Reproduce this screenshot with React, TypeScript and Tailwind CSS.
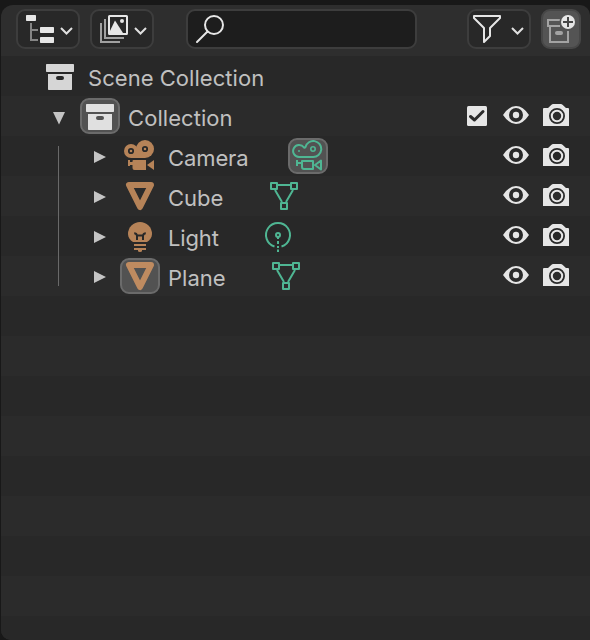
import React from "react";

type IconProps = { className?: string };

const Chevron = ({ x }: { x: number }) => (
  <path d={`M${x} 17l5.5 5.5 5.5-5.5`} fill="none" stroke="#e0e0e0" strokeWidth="2" />
);

const OutlinerIcon = () => (
  <svg width="60" height="36" viewBox="0 0 60 36">
    <path d="M13 12V29H20M13 19H20" fill="none" stroke="#858585" strokeWidth="2" />
    <g fill="#e6e6e6">
      <rect x="8" y="4" width="10" height="6" rx="0.7" />
      <rect x="22" y="16" width="14" height="6" rx="0.7" />
      <rect x="22" y="26" width="14" height="6" rx="0.7" />
    </g>
    <Chevron x={43} />
  </svg>
);

const ImagesIcon = () => (
  <svg width="60" height="36" viewBox="0 0 60 36">
    <path d="M9 12V31H28" fill="none" stroke="#a0a0a0" strokeWidth="2" />
    <path d="M13 8V27H32" fill="none" stroke="#a0a0a0" strokeWidth="2" />
    <rect x="17" y="5" width="18" height="18" rx="0.5" fill="none" stroke="#e6e6e6" strokeWidth="2" />
    <path d="M17 22L23 9.5 31 22Z" fill="#e6e6e6" />
    <circle cx="30" cy="10" r="2" fill="#e6e6e6" />
    <Chevron x={43} />
  </svg>
);

const SearchIcon = () => (
  <svg width="40" height="36" viewBox="0 0 40 36" fill="none" stroke="#e6e6e6" strokeWidth="2">
    <circle cx="26" cy="14" r="9" />
    <path d="M19.5 20.5L9 31" strokeLinecap="round" />
  </svg>
);

const FilterIcon = () => (
  <svg width="60" height="36" viewBox="0 0 60 36">
    <path
      d="M5 5H31V7L21 17V25L15 31V17L5 7Z"
      fill="none"
      stroke="#e6e6e6"
      strokeWidth="2"
      strokeLinejoin="round"
    />
    <Chevron x={43} />
  </svg>
);

const NewCollectionIcon = () => (
  <svg width="36" height="36" viewBox="0 0 36 36">
    <path
      d="M17 9H5V15H17M7 15V31H25V20"
      fill="none"
      stroke="#a3a3a3"
      strokeWidth="2"
    />
    <rect x="12" y="20" width="8" height="4" rx="2" fill="#a3a3a3" />
    <circle cx="25" cy="11" r="8.5" fill="#545454" />
    <circle cx="25" cy="11" r="7" fill="#e6e6e6" />
    <path d="M25 6V16M20 11H30" stroke="#474747" strokeWidth="2" />
  </svg>
);

const ArchiveIcon = () => (
  <svg className="block" width="40" height="36" viewBox="0 0 40 36" fill="currentColor">
    <rect x="6" y="6" width="28" height="8" rx="0.7" />
    <path
      fillRule="evenodd"
      d="M8 16H32V31.3Q32 32 31.3 32H8.7Q8 32 8 31.3ZM18 18A2 2 0 0 0 18 22H22A2 2 0 0 0 22 18Z"
    />
  </svg>
);

const CameraObject = () => (
  <svg className="block" width="40" height="36" viewBox="0 0 40 36" fill="#b68358">
    <circle cx="11" cy="13" r="7" />
    <circle cx="25" cy="11" r="9" />
    <rect x="11" y="13" width="14" height="7" />
    <g fill="none" stroke="#282828" strokeWidth="1.8">
      <circle cx="11" cy="13" r="2.2" />
      <circle cx="25" cy="11" r="2.2" />
    </g>
    <path d="M8 22H10V24H12.5V23Q12.5 22 13.5 22H26V32H14.5Q12.5 32 12.5 30V27H10V28H8Z" />
    <path d="M27 27L34 22V32Z" />
  </svg>
);

const MeshObject = ({ className }: IconProps) => (
  <svg className={`block ${className}`} width="40" height="36" viewBox="0 0 40 36" fill="none">
    <path d="M9 7H31L20 29Z" stroke="currentColor" strokeWidth="6" strokeLinejoin="round" />
  </svg>
);

const LightObject = () => (
  <svg className="block" width="40" height="36" viewBox="0 0 40 36" fill="#b68358">
    <path d="M13 24C10 22 8 19.5 8 16A12 12 0 0 1 32 16C32 19.5 30 22 27 24Z" />
    <path
      d="M14.2 15.2Q16.5 15.2 17 17.6H23Q23.5 15.2 25.8 15.2M17 17V22M23 17V22"
      fill="none"
      stroke="#282828"
      strokeWidth="2"
    />
    <path d="M14 26H26V28H14ZM14 30H26V32H22V33Q22 34 20 34Q18 34 18 33V32H14Z" />
  </svg>
);

const CameraData = () => (
  <svg
    className="block"
    width="36"
    height="32"
    viewBox="2 2 36 32"
    fill="none"
    stroke="#4fb693"
    strokeWidth="2"
    strokeLinejoin="round"
  >
    <path d="M11 19A6 6 0 1 1 16 9.5Q17 10 17.5 9A8 8 0 1 1 25 19Z" />
    <circle cx="25" cy="11" r="2.2" strokeWidth="1.6" />
    <circle cx="11" cy="13" r="1" fill="#4fb693" stroke="none" />
    <path d="M9 22V28M9 25H13M14 23H25V31H16Q14 31 14 29ZM33 22.5V31.5L27 27Z" />
  </svg>
);

const MeshData = () => (
  <svg
    className="block"
    width="40"
    height="36"
    viewBox="0 0 40 36"
    fill="none"
    stroke="#4fb693"
    strokeWidth="2"
    strokeLinejoin="round"
  >
    <rect x="7" y="5" width="6" height="6" />
    <rect x="27" y="5" width="6" height="6" />
    <rect x="17" y="25" width="6" height="6" />
    <path d="M14 7H26M11 12L18 24M29 12L22 24" />
  </svg>
);

const LightData = () => (
  <svg
    className="block"
    width="40"
    height="36"
    viewBox="0 0 40 36"
    fill="none"
    stroke="#4fb693"
    strokeWidth="2"
  >
    <path d="M16.5 28.5A12 12 0 1 1 23.5 28.5" />
    <circle cx="20" cy="17" r="2" />
    <path d="M20 19V21M20 23V26M20 28V30M20 31.5V34" />
  </svg>
);

const CheckedBox = () => (
  <svg className="block" width="20" height="20" viewBox="0 0 20 20">
    <rect width="20" height="20" rx="1.5" fill="#e6e6e6" />
    <path
      d="M3.5 10.5L7.5 14L16 5.5"
      fill="none"
      stroke="#2b2b2b"
      strokeWidth="3"
      strokeLinecap="round"
      strokeLinejoin="round"
    />
  </svg>
);

const EyeIcon = ({ className }: IconProps) => (
  <svg className={className} width="26" height="18" viewBox="0 0 26 18" fill="#e6e6e6">
    <path
      fillRule="evenodd"
      d="M0 9Q6 0 13 0T26 9Q20 18 13 18T0 9ZM13 2A7 7 0 0 0 13 16A7 7 0 0 0 13 2Z"
    />
    <circle cx="13" cy="9" r="3.2" />
  </svg>
);

const RenderIcon = ({ className }: IconProps) => (
  <svg className={className} width="26" height="22" viewBox="0 0 26 22" fill="#e6e6e6">
    <path
      fillRule="evenodd"
      d="M1 4H5L8.5 0.7Q9.3 0 10 0H18Q18.7 0 19.5 0.7L23 4H25Q26 4 26 5V22H0V5Q0 4 1 4ZM14 4A8 8 0 0 0 14 20A8 8 0 0 0 14 4Z"
    />
    <circle cx="14" cy="12" r="5.2" fill="none" stroke="#e6e6e6" strokeWidth="2" />
  </svg>
);

const Badge = ({ children }: { children: React.ReactNode }) => (
  <span className="flex h-9 w-10 shrink-0 items-center justify-center overflow-hidden rounded-[9px] border-2 border-[#6b6b6b] bg-[#525252]">
    <span className="shrink-0">{children}</span>
  </span>
);

const Toggles = () => (
  <div className="ml-auto flex items-start self-start pr-[21px]">
    <EyeIcon className="mt-[10px] block" />
    <RenderIcon className="mt-2 ml-[14px] block" />
  </div>
);

type ObjectRowProps = {
  name: string;
  width: string;
  icon: React.ReactNode;
  data: React.ReactNode;
  shade: string;
};

const ObjectRow = ({ name, width, icon, data, shade }: ObjectRowProps) => (
  <div className={`flex h-10 shrink-0 items-center ${shade}`}>
    <svg className="mr-[14px] ml-[93px] shrink-0" width="12" height="16" viewBox="0 0 12 16">
      <path d="M0 3L12 9L0 15Z" fill="#c4c4c4" />
    </svg>
    {icon}
    <span className={`ml-2 mr-10 whitespace-nowrap pt-1 ${width}`}>{name}</span>
    {data}
    <Toggles />
  </div>
);

const DARK = "bg-[#282828]";
const LIGHT = "bg-[#2b2b2b]";
const EMPTY_ROWS = [DARK, LIGHT, DARK, LIGHT, DARK, LIGHT, DARK, LIGHT, DARK];
const BUTTON = "h-10 shrink-0 overflow-hidden rounded-[9px] border-2 border-[#3d3d3d] bg-[#282828]";

export default function App() {
  return (
    <div className="h-[640px] w-[590px] overflow-hidden bg-[#181818] pt-[5px] pl-px font-['Inter',sans-serif] text-[22px] leading-none text-[#c0c0c0]">
      <div className="relative flex h-[635px] flex-col overflow-hidden rounded-tl-xl rounded-tr-[10px] rounded-bl-[10px] bg-[#2e2e2e]">
        <header className="flex h-[51px] shrink-0 items-start pt-1 pl-[15px]">
          <button className={`${BUTTON} w-16`}>
            <OutlinerIcon />
          </button>
          <button className={`${BUTTON} ml-[10px] w-16`}>
            <ImagesIcon />
          </button>
          <div className="ml-8 h-10 w-[231px] shrink-0 overflow-hidden rounded-[9px] border-2 border-[#3d3d3d] bg-[#1d1d1d]">
            <SearchIcon />
          </div>
          <button className={`${BUTTON} ml-[50px] w-16`}>
            <FilterIcon />
          </button>
          <button className="ml-[10px] h-10 w-10 shrink-0 overflow-hidden rounded-[9px] border-2 border-[#474747] bg-[#545454]">
            <NewCollectionIcon />
          </button>
        </header>

        <div className={`flex h-10 shrink-0 items-center ${DARK}`}>
          <span className="ml-[39px] text-[#d6d6d6]">
            <ArchiveIcon />
          </span>
          <span className="ml-2 pt-1 tracking-[0.04px]">Scene Collection</span>
        </div>

        <div className={`flex h-10 shrink-0 items-center ${LIGHT}`}>
          <svg className="mr-[15px] ml-[52px] shrink-0" width="12" height="18" viewBox="0 0 12 18">
            <path d="M0 5H12L6 17.5Z" fill="#c4c4c4" />
          </svg>
          <Badge>
            <span className="text-[#e0e0e0]">
              <ArchiveIcon />
            </span>
          </Badge>
          <span className="ml-2 pt-1 tracking-[0.06px]">Collection</span>
          <div className="mt-[10px] ml-auto self-start pr-4">
            <CheckedBox />
          </div>
          <div className="self-start">
            <Toggles />
          </div>
        </div>

        <div className="relative">
          <ObjectRow
            name="Camera"
            width="w-20 tracking-[-0.1px]"
            icon={<CameraObject />}
            data={
              <Badge>
                <CameraData />
              </Badge>
            }
            shade={DARK}
          />
          <ObjectRow
            name="Cube"
            width="w-14"
            icon={<MeshObject className="text-[#b68358]" />}
            data={<MeshData />}
            shade={LIGHT}
          />
          <ObjectRow
            name="Light"
            width="w-[50px] tracking-[-0.15px]"
            icon={<LightObject />}
            data={<LightData />}
            shade={DARK}
          />
          <ObjectRow
            name="Plane"
            width="w-[58px]"
            icon={
              <Badge>
                <MeshObject className="text-[#bf8b60]" />
              </Badge>
            }
            data={<MeshData />}
            shade={LIGHT}
          />
          <div className="absolute top-[10px] left-[57px] h-[140px] w-px bg-[#696969]" />
        </div>

        {EMPTY_ROWS.map((shade, i) => (
          <div key={i} className={`h-10 shrink-0 ${shade}`} />
        ))}
      </div>
    </div>
  );
}
